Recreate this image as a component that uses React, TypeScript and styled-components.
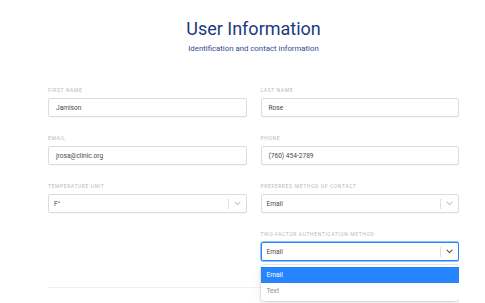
import styled, { createGlobalStyle } from 'styled-components';

const GlobalStyle = createGlobalStyle`
  html, body {
    margin: 0;
    padding: 0;
    background: #ffffff;
    font-family: Roboto, "Liberation Sans", sans-serif;
    -webkit-font-smoothing: antialiased;
  }
`;

const Chevron = ({ dark }: { dark?: boolean }) => (
  <svg width="7" height="5" viewBox="0 0 7 5" fill="none">
    <path d="M1 1.2 L3.5 3.6 L6 1.2" stroke={dark ? '#555' : '#c4c4c4'} strokeWidth="1.1" strokeLinecap="round" strokeLinejoin="round" />
  </svg>
);

const Field = ({ label, value }: { label: string; value: string }) => (
  <FieldBox>
    <Label>{label}</Label>
    <Input>{value}</Input>
  </FieldBox>
);

const SelectField = ({ label, value, open }: { label: string; value: string; open?: boolean }) => (
  <FieldBox>
    <Label>{label}</Label>
    <SelectBox $focused={open}>
      <SelectValue>{value}</SelectValue>
      <Indicator>
        <Separator />
        <ChevronWrap>
          <Chevron dark={open} />
        </ChevronWrap>
      </Indicator>
    </SelectBox>
    {open && (
      <Menu>
        <Option $active>Email</Option>
        <Option>Text</Option>
      </Menu>
    )}
  </FieldBox>
);

const App = () => {
  return (
    <Page>
      <GlobalStyle />
      <Header>
        <Title>User Information</Title>
        <Subtitle>Identification and contact information</Subtitle>
      </Header>
      <Grid>
        <Field label="First Name" value="Jamison" />
        <Field label="Last Name" value="Rose" />
        <Field label="Email" value="jrosa@clinic.org" />
        <Field label="Phone" value="(760) 454-2789" />
        <SelectField label="Temperature Unit" value="F°" />
        <SelectField label="Preferred Method of Contact" value="Email" />
        <div />
        <SelectField label="Two-Factor Authentication Method" value="Email" open />
      </Grid>
      <Divider />
    </Page>
  );
};
export default App;

const Page = styled.div`
  box-sizing: border-box;
  width: 459px;
  height: 303px;
  overflow: hidden;
  padding: 17px 0 0 48px;
`;

const Header = styled.header`
  display: flex;
  flex-direction: column;
  align-items: center;
  gap: 3px;
`;

const Title = styled.h1`
  margin: 0;
  font-size: 18px;
  line-height: 23px;
  font-weight: 400;
  color: #20397f;
`;

const Subtitle = styled.p`
  margin: 0;
  font-size: 7.8px;
  line-height: 11px;
  color: #34498f;
`;

const Grid = styled.div`
  display: grid;
  grid-template-columns: 1fr 1fr;
  column-gap: 14px;
  row-gap: 17px;
  margin-top: 32px;
`;

const FieldBox = styled.div`
  position: relative;
  display: flex;
  flex-direction: column;
`;

const Label = styled.label`
  font-size: 5px;
  line-height: 8px;
  letter-spacing: 0.6px;
  text-transform: uppercase;
  color: #b9b9b9;
  margin-bottom: 4px;
`;

const Input = styled.div`
  box-sizing: border-box;
  height: 19px;
  border: 1px solid #dcdcdc;
  border-radius: 2px;
  padding: 0 7px;
  display: flex;
  align-items: center;
  font-size: 6.6px;
  color: #4a4a4a;
  box-shadow: 0 1px 1px rgba(0, 0, 0, 0.03);
`;

const SelectBox = styled.div<{ $focused?: boolean }>`
  box-sizing: border-box;
  height: 19px;
  border: 1px solid ${p => (p.$focused ? '#2684ff' : '#dcdcdc')};
  box-shadow: ${p => (p.$focused ? '0 0 0 0.5px #2684ff' : '0 1px 1px rgba(0,0,0,0.03)')};
  border-radius: 2px;
  display: flex;
  align-items: center;
  justify-content: space-between;
  padding-left: 5px;
`;

const SelectValue = styled.span`
  font-size: 6.6px;
  color: #4a4a4a;
`;

const Indicator = styled.div`
  display: flex;
  align-items: center;
  height: 100%;
`;

const Separator = styled.span`
  width: 1px;
  height: 10px;
  background: #dedede;
`;

const ChevronWrap = styled.span`
  width: 17px;
  display: flex;
  justify-content: center;
  align-items: center;
`;

const Menu = styled.div`
  position: absolute;
  top: 35px;
  left: 0;
  right: 0;
  background: #ffffff;
  border-radius: 3px;
  padding: 2px 0;
  box-shadow: 0 0 0 1px rgba(0, 0, 0, 0.08), 0 3px 8px rgba(0, 0, 0, 0.1);
  z-index: 2;
`;

const Option = styled.div<{ $active?: boolean }>`
  height: 16px;
  display: flex;
  align-items: center;
  padding-left: 6px;
  font-size: 6.6px;
  background: ${p => (p.$active ? '#2684ff' : 'transparent')};
  color: ${p => (p.$active ? '#ffffff' : '#8a8a8a')};
`;

const Divider = styled.hr`
  margin: 26px 0 0 0;
  border: none;
  height: 1px;
  background: #efefef;
`;
